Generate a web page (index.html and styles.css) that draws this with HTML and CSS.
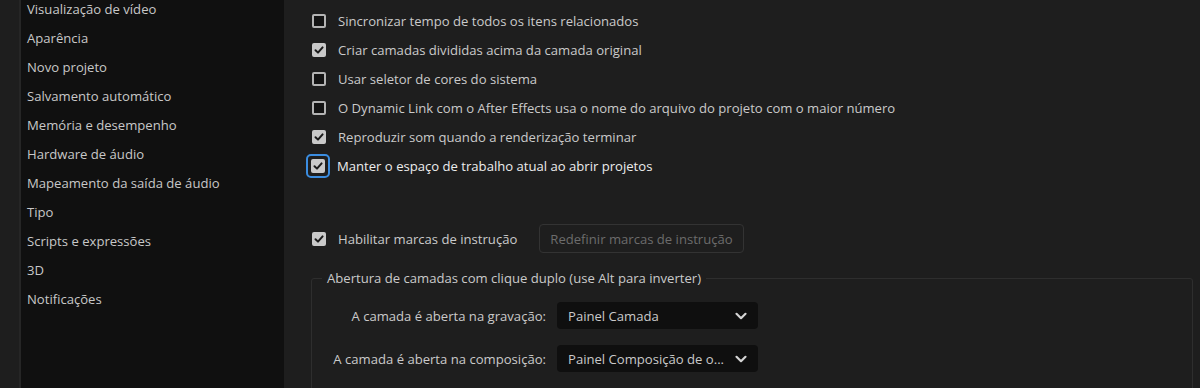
FILE: index.html
```html
<!DOCTYPE html>
<html lang="pt">
<head>
<meta charset="utf-8">
<link rel="stylesheet" href="styles.css">
</head>
<body>
<div class="window">
  <nav class="sidebar">
    <ul class="nav-list">
      <li>Visualização de vídeo</li>
      <li>Aparência</li>
      <li>Novo projeto</li>
      <li>Salvamento automático</li>
      <li>Memória e desempenho</li>
      <li>Hardware de áudio</li>
      <li>Mapeamento da saída de áudio</li>
      <li>Tipo</li>
      <li>Scripts e expressões</li>
      <li>3D</li>
      <li>Notificações</li>
    </ul>
  </nav>
  <main class="content">
    <div class="options">
      <label class="opt"><span class="cb"></span><span>Sincronizar tempo de todos os itens relacionados</span></label>
      <label class="opt"><span class="cb checked"><svg viewBox="0 0 14 14"><path d="M3.5 7.2 L6 9.6 L10.6 4.4"/></svg></span><span>Criar camadas divididas acima da camada original</span></label>
      <label class="opt"><span class="cb"></span><span>Usar seletor de cores do sistema</span></label>
      <label class="opt"><span class="cb"></span><span>O Dynamic Link com o After Effects usa o nome do arquivo do projeto com o maior número</span></label>
      <label class="opt"><span class="cb checked"><svg viewBox="0 0 14 14"><path d="M3.5 7.2 L6 9.6 L10.6 4.4"/></svg></span><span>Reproduzir som quando a renderização terminar</span></label>
      <label class="opt focus"><span class="ring"><span class="cb checked"><svg viewBox="0 0 14 14"><path d="M3.5 7.2 L6 9.6 L10.6 4.4"/></svg></span></span><span>Manter o espaço de trabalho atual ao abrir projetos</span></label>
    </div>
    <div class="hint-row">
      <label class="opt"><span class="cb checked"><svg viewBox="0 0 14 14"><path d="M3.5 7.2 L6 9.6 L10.6 4.4"/></svg></span><span>Habilitar marcas de instrução</span></label>
      <button class="btn" disabled>Redefinir marcas de instrução</button>
    </div>
    <fieldset class="group">
      <legend>Abertura de camadas com clique duplo (use Alt para inverter)</legend>
      <div class="grid">
        <span class="lbl">A camada é aberta na gravação:</span>
        <div class="select"><span class="val">Painel Camada</span><svg class="chev" viewBox="0 0 14 14"><path d="M2.5 4.8 L7 9.2 L11.5 4.8"/></svg></div>
        <span class="lbl">A camada é aberta na composição:</span>
        <div class="select"><span class="val">Painel Composição de o...</span><svg class="chev" viewBox="0 0 14 14"><path d="M2.5 4.8 L7 9.2 L11.5 4.8"/></svg></div>
      </div>
    </fieldset>
  </main>
</div>
</body>
</html>
```
FILE: styles.css
```css
* { box-sizing: border-box; }
html, body { margin: 0; padding: 0; }
body {
  width: 1200px;
  height: 388px;
  overflow: hidden;
  background: #1e1e1e;
  font-family: "Open Sans", "Noto Sans", sans-serif;
  font-size: 13.1px;
  color: #c6c6c6;
}
.window {
  display: flex;
  height: 388px;
  padding-left: 19px;
}
.sidebar {
  width: 265px;
  flex: none;
  background: #101010;
  border-left: 2px solid #262626;
}
.nav-list {
  list-style: none;
  margin: -5px 0 0 0;
  padding: 0 0 0 6px;
}
.nav-list li {
  height: 29px;
  line-height: 29px;
  color: #c8c8c8;
  white-space: nowrap;
}
.content {
  flex: 1;
  padding: 6px 7px 0 28px;
  display: flex;
  flex-direction: column;
}
.options {
  display: flex;
  flex-direction: column;
}
.opt {
  display: flex;
  align-items: center;
  height: 29px;
  gap: 12px;
  color: #cacaca;
  white-space: nowrap;
}
.opt.focus { color: #ededed; }
.cb {
  width: 14px;
  height: 14px;
  flex: none;
  border: 2px solid #b4b4b4;
  border-radius: 2px;
  background: #141414;
  display: flex;
  align-items: center;
  justify-content: center;
}
.cb.checked {
  background: #c9c9c9;
  border-color: #c9c9c9;
}
.cb svg {
  width: 14px;
  height: 14px;
  flex: none;
}
.cb svg path {
  fill: none;
  stroke: #1a1a1a;
  stroke-width: 2;
  stroke-linecap: round;
  stroke-linejoin: round;
}
.ring {
  margin: 0 -5px 0 -6px;
  width: 24px;
  height: 24px;
  flex: none;
  border: 2px solid #3b8de0;
  border-radius: 5px;
  display: flex;
  align-items: center;
  justify-content: center;
}
.hint-row {
  display: flex;
  align-items: center;
  margin-top: 44px;
  gap: 22px;
}
.btn {
  height: 29px;
  padding: 0 10px;
  background: #1e1e1e;
  border: 1px solid #333333;
  border-radius: 4px;
  color: #6c6c6c;
  font-family: inherit;
  font-size: 13.1px;
}
.group {
  margin: 15px 0 0 -1px;
  padding: 0 0 30px 0;
  border: 1px solid #2e2e2e;
  border-radius: 3px;
  min-width: 0;
}
.group legend {
  margin-left: 10px;
  padding: 0 5px;
  color: #cacaca;
  line-height: 20px;
}
.grid {
  display: grid;
  grid-template-columns: 234px 201px;
  column-gap: 11px;
  row-gap: 16px;
  align-items: center;
  margin-top: 14px;
}
.lbl {
  text-align: right;
  white-space: nowrap;
  color: #cacaca;
}
.select {
  height: 27px;
  background: #0f0f0f;
  border-radius: 4px;
  display: flex;
  align-items: center;
  justify-content: space-between;
  padding: 0 10px 0 11px;
  color: #cacaca;
}
.val { white-space: nowrap; }
.chev {
  width: 14px;
  height: 14px;
}
.chev path {
  fill: none;
  stroke: #d4d4d4;
  stroke-width: 2.2;
  stroke-linecap: round;
  stroke-linejoin: round;
}
```
